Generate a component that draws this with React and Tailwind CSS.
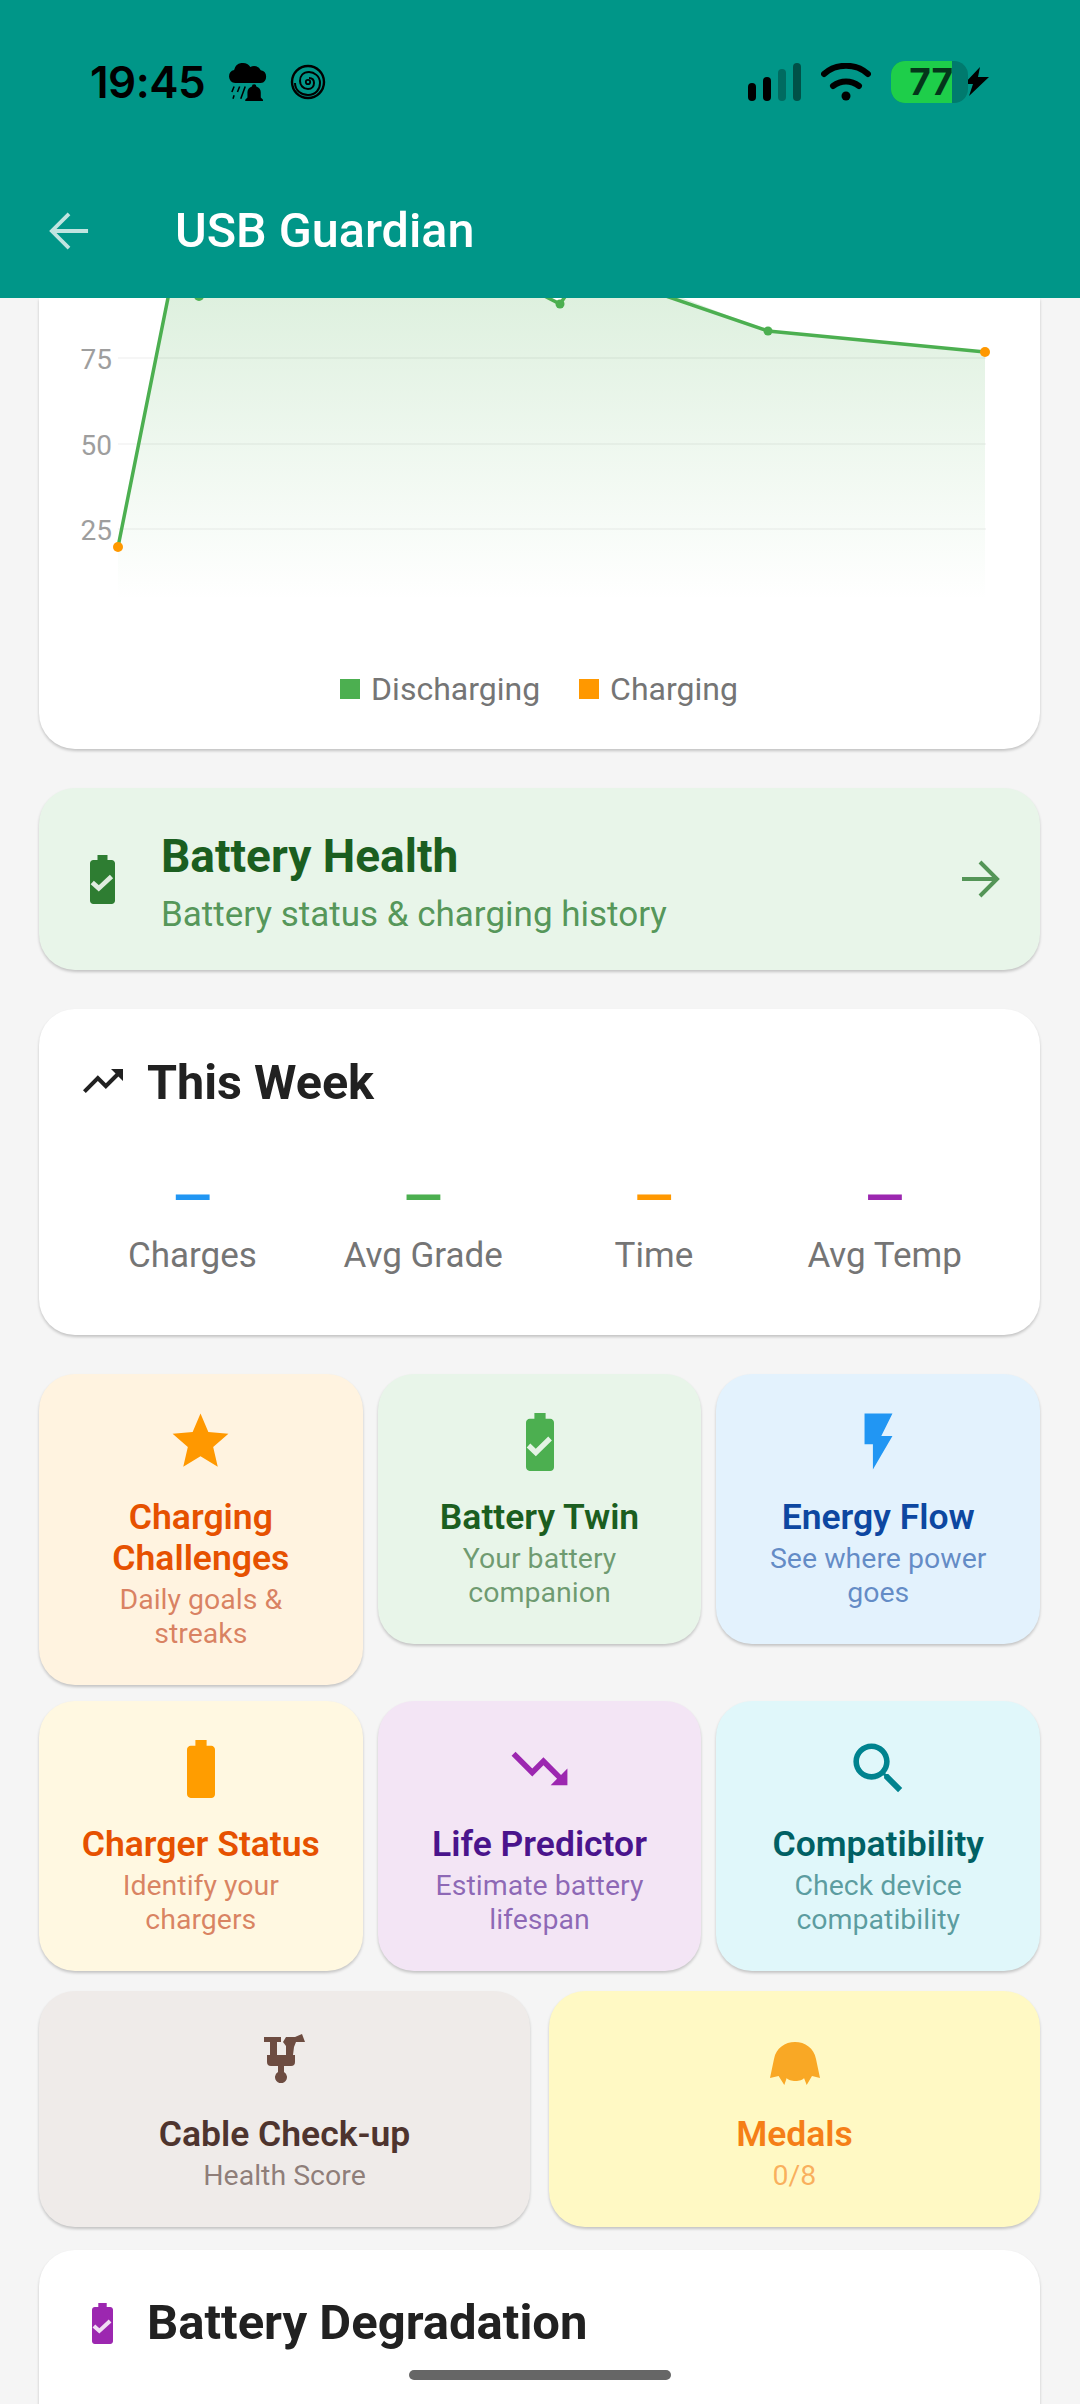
const batteryPath = "M15.67 4H14V2h-4v2H8.33C7.6 4 7 4.6 7 5.33v15.33C7 21.4 7.6 22 8.33 22h7.33c.74 0 1.34-.6 1.34-1.33V5.33C17 4.6 16.4 4 15.67 4z";

function BatteryCheck({ className }) {
  return (
    <svg viewBox="7 2 10 20" preserveAspectRatio="none" className={className}>
      <path d={batteryPath} fill="currentColor" />
      <path d="M7.9 13.2l2.6 2.4 5.1-4.8" fill="none" stroke="#fff" strokeOpacity="0.85" strokeWidth="1.9" />
    </svg>
  );
}

function MdIcon({ d, className }) {
  return (
    <svg viewBox="0 0 24 24" className={className}>
      <path d={d} fill="currentColor" />
    </svg>
  );
}

const trendUp = "M16 6l2.29 2.29-4.88 4.88-4-4L2 16.59 3.41 18l6-6 4 4 6.3-6.29L22 12V6z";
const trendDown = "M16 18l2.29-2.29-4.88-4.88-4 4L2 7.41 3.41 6l6 6 4-4 6.3 6.29L22 12v6z";
const search = "M15.5 14h-.79l-.28-.27C15.41 12.59 16 11.11 16 9.5 16 5.91 13.09 3 9.5 3S3 5.91 3 9.5 5.91 16 9.5 16c1.61 0 3.09-.59 4.23-1.57l.27.28v.79l5 4.99L20.49 19l-4.99-5zm-6 0C7.01 14 5 11.99 5 9.5S7.01 5 9.5 5 14 7.01 14 9.5 11.99 14 9.5 14z";

function StatusBar() {
  return (
    <div className="flex items-center justify-between pl-[90px] pr-[90px] pt-[59px] h-[104px] text-black">
      <div className="flex items-center">
        <span className="text-[44px] leading-[44px] font-semibold font-['Inter',sans-serif] tracking-[-0.5px]">19:45</span>
        <svg viewBox="3 1 35 36" className="w-[40px] h-[40px] ml-[23px]">
          <path d="M9 20a6 6 0 0 1-1-11.8 8 8 0 0 1 14.6-2.6A6.6 6.6 0 0 1 32 8.4 5.9 5.9 0 0 1 32 20z" fill="currentColor" />
          <path d="M8 23l-2 5M13 23l-2 5M18 23l-4 11M8 31l-1 3" stroke="currentColor" strokeWidth="1.4" fill="none" />
          <path d="M26 21a2 2 0 0 1 2 2 6 6 0 0 1 4 6v4l2 2v1H18v-1l2-2v-4a6 6 0 0 1 4-6 2 2 0 0 1 2-2zM23.6 37h4.8a2.4 2.4 0 0 1-4.8 0z" fill="currentColor" />
        </svg>
        <svg viewBox="0 0 36 36" className="w-[36px] h-[36px] ml-[22px]" fill="none" stroke="currentColor">
          <circle cx="18" cy="18" r="16" strokeWidth="2.4" />
          <path d="M5 19c0 8 7 12 13 12 8 0 12-6 12-12 0-7-6-11-11-11-6 0-9 4-9 9 0 4 3 8 8 8 4 0 6-3 6-6s-2-5-5-5" strokeWidth="2" />
          <circle cx="18" cy="18" r="2.2" strokeWidth="1.8" />
        </svg>
      </div>
      <div className="flex items-center">
        <svg viewBox="0 0 53 38" className="w-[53px] h-[38px]">
          <rect x="0" y="20" width="8" height="18" rx="4" fill="#000" />
          <rect x="15" y="14" width="8" height="24" rx="4" fill="#000" />
          <rect x="30" y="6" width="8" height="32" rx="4" fill="#006b60" />
          <rect x="45" y="0" width="8" height="38" rx="4" fill="#005148" />
        </svg>
        <svg viewBox="0 0 50 38" className="w-[50px] h-[38px] ml-[20px]" fill="none" stroke="#000" strokeWidth="6" strokeLinecap="round">
          <path d="M3 11c12-11 32-11 44 0" />
          <path d="M12 23c8-6 18-6 26 0" />
          <circle cx="25" cy="33" r="4.5" fill="#000" stroke="none" />
        </svg>
        <div className="relative ml-[20px] w-[77px] h-[42px]">
          <div className="absolute inset-0 rounded-[14px] bg-[#007a6e]" />
          <div className="absolute left-0 top-0 bottom-0 w-[61px] rounded-l-[14px] bg-[#1ece4a]" />
          <span className="absolute right-[15px] top-0 leading-[42px] text-[37px] font-bold font-['Inter',sans-serif] text-[#04361a]">77</span>
        </div>
        <svg viewBox="0 0 27 29" className="w-[27px] h-[29px] -ml-[5px]">
          <path d="M17 0L1 17h9L6 29 26 10h-11z" fill="#000" />
        </svg>
      </div>
    </div>
  );
}

function Chart() {
  return (
    <svg viewBox="0 0 1001 340" className="w-full h-[340px] block">
      <defs>
        <linearGradient id="areaFill" x1="0" y1="0" x2="0" y2="1">
          <stop offset="0" stopColor="#4caf50" stopOpacity="0.19" />
          <stop offset="1" stopColor="#4caf50" stopOpacity="0" />
        </linearGradient>
      </defs>
      <path d="M79 249L130-10H490L521 6 532-10H618L729 33 946 54V302H79Z" fill="url(#areaFill)" />
      {[60, 146, 231].map((y) => (
        <line key={y} x1="79" x2="947" y1={y} y2={y} stroke="#000" strokeOpacity="0.05" strokeWidth="1.5" />
      ))}
      {[["75", 61], ["50", 147], ["25", 232]].map(([label, y]) => (
        <text key={label} x="73" y={y + 10} textAnchor="end" fontSize="28" fill="#9e9e9e" fontFamily="Roboto">{label}</text>
      ))}
      <path d="M79 249L135-30M160-2L180-8M490-10L521 6 532-10M618-5L729 33 946 54" fill="none" stroke="#4caf50" strokeWidth="3.5" />
      <circle cx="160" cy="-2" r="5" fill="#4caf50" />
      <circle cx="521" cy="6" r="4.5" fill="#4caf50" />
      <circle cx="729" cy="33" r="4.5" fill="#4caf50" />
      <circle cx="79" cy="249" r="5" fill="#ff9800" />
      <circle cx="946" cy="54" r="5" fill="#ff9800" />
    </svg>
  );
}

const rowOne = [
  { title: "Charging Challenges", sub: "Daily goals & streaks", bg: "bg-[#fff3e0]", head: "text-[#e65100]", body: "text-[#bf360c]/60", icon: <MdIcon d="M12 17.27L18.18 21l-1.64-7.03L22 9.24l-7.19-.61L12 2 9.19 8.63 2 9.24l5.46 4.73L5.82 21z" className="w-[67px] h-[67px] text-[#ff9800]" /> },
  { title: "Battery Twin", sub: "Your battery companion", bg: "bg-[#e8f5e9]", head: "text-[#1b5e20]", body: "text-[#1b5e20]/60", icon: <BatteryCheck className="w-[28px] h-[58px] text-[#4caf50] my-[4px]" /> },
  { title: "Energy Flow", sub: "See where power goes", bg: "bg-[#e3f2fd]", head: "text-[#0d47a1]", body: "text-[#0d47a1]/60", icon: <MdIcon d="M7 2v11h3v9l7-12h-4l4-8z" className="w-[67px] h-[67px] text-[#2196f3]" /> },
];

const rowTwo = [
  { title: "Charger Status", sub: "Identify your chargers", bg: "bg-[#fff8e1]", head: "text-[#e65100]", body: "text-[#bf360c]/60", icon: <svg viewBox="7 2 10 20" preserveAspectRatio="none" className="w-[28px] h-[58px] text-[#ff9d00] my-[4px]"><path d={batteryPath} fill="currentColor" /></svg> },
  { title: "Life Predictor", sub: "Estimate battery lifespan", bg: "bg-[#f3e5f5]", head: "text-[#4a148c]", body: "text-[#4a148c]/60", icon: <MdIcon d={trendDown} className="w-[67px] h-[67px] text-[#9c27b0]" /> },
  { title: "Compatibility", sub: "Check device compatibility", bg: "bg-[#e0f7fa]", head: "text-[#006064]", body: "text-[#006064]/60", icon: <MdIcon d={search} className="w-[67px] h-[67px] text-[#00838f]" /> },
];

function Tile({ item }) {
  return (
    <div className={`flex-1 basis-0 min-w-0 rounded-[36px] shadow-[0_2px_3px_rgba(0,0,0,0.2)] px-[33px] pt-[34px] pb-[34px] flex flex-col items-center text-center ${item.bg}`}>
      <div className="h-[67px] flex items-center justify-center">{item.icon}</div>
      <div className={`mt-[22px] text-[35.5px] leading-[41px] font-semibold ${item.head}`}>{item.title}</div>
      <div className={`mt-[4px] text-[28.5px] leading-[34px] ${item.body}`}>{item.sub}</div>
    </div>
  );
}

export default function App() {
  return (
    <div className="relative h-[2404px] overflow-hidden bg-[#f5f5f5] font-['Roboto',sans-serif]">
      <div className="h-[298px] bg-[#009688]">
        <StatusBar />
        <div className="flex items-center mt-[99px] pl-[49px]">
          <svg viewBox="0 0 42 42" className="w-[40px] h-[40px]" fill="none" stroke="#c0e4e0" strokeWidth="4">
            <path d="M41 21H4M21 3L3 21l18 18" />
          </svg>
          <span className="ml-[86px] text-[48.5px] leading-[56px] font-medium text-white">USB Guardian</span>
        </div>
      </div>

      <div className="pl-[39px] pr-[40px] flex flex-col">
        <div className="bg-white rounded-b-[36px] shadow-[0_2px_3px_rgba(0,0,0,0.2)] h-[451px]">
          <Chart />
          <div className="flex items-center justify-center mt-[31px] pr-[1px]">
            <span className="w-[20px] h-[20px] bg-[#4caf50]" />
            <span className="ml-[11px] text-[32px] leading-[40px] text-[#757575]">Discharging</span>
            <span className="ml-[39px] w-[20px] h-[20px] bg-[#ff9800]" />
            <span className="ml-[11px] text-[32px] leading-[40px] text-[#757575]">Charging</span>
          </div>
        </div>

        <div className="mt-[39px] h-[182px] rounded-[36px] bg-[#e8f5e9] shadow-[0_2px_3px_rgba(0,0,0,0.2)] flex items-center pl-[51px] pr-[40px]">
          <BatteryCheck className="w-[25px] h-[49px] text-[#2e7d32]" />
          <div className="ml-[46px] flex-1 pt-[6px]">
            <div className="text-[46px] leading-[52px] font-bold text-[#1b5e20]">Battery Health</div>
            <div className="mt-[13px] text-[35px] leading-[40px] text-[#2e7d32]/80">Battery status &amp; charging history</div>
          </div>
          <svg viewBox="0 0 38 38" className="w-[38px] h-[38px]" fill="none" stroke="#2e7d32" strokeOpacity="0.8" strokeWidth="4">
            <path d="M0 19h35M18 2l17 17-17 17" />
          </svg>
        </div>

        <div className="mt-[39px] h-[326px] rounded-[36px] bg-white shadow-[0_2px_3px_rgba(0,0,0,0.2)] pl-[38px] pr-[40px] pt-[44px]">
          <div className="flex items-center">
            <MdIcon d={trendUp} className="ml-[2px] mb-[5px] w-[48px] h-[48px] text-[#212121]" />
            <span className="ml-[20px] text-[48.5px] leading-[60px] font-bold text-[#212121]">This Week</span>
          </div>
          <div className="mt-[60px] flex">
            {[
              ["Charges", "text-[#2196f3]"],
              ["Avg Grade", "text-[#4caf50]"],
              ["Time", "text-[#ff9800]"],
              ["Avg Temp", "text-[#9c27b0]"],
            ].map(([label, color]) => (
              <div key={label} className="flex-1 flex flex-col items-center">
                <span className={`text-[50px] leading-[50px] font-bold ${color}`}>—</span>
                <span className="mt-[13px] text-[35px] leading-[40px] text-[#757575]">{label}</span>
              </div>
            ))}
          </div>
        </div>

        <div className="mt-[39px] flex items-start gap-[15px]">
          {rowOne.map((item) => (
            <Tile key={item.title} item={item} />
          ))}
        </div>
        <div className="mt-[16px] flex gap-[15px]">
          {rowTwo.map((item) => (
            <Tile key={item.title} item={item} />
          ))}
        </div>
        <div className="mt-[20px] flex gap-[19px]">
          <Tile
            item={{
              title: "Cable Check-up",
              sub: "Health Score",
              bg: "bg-[#efebe9]",
              head: "text-[#4e342e]",
              body: "text-[#4e342e]/60",
              icon: (
                <svg viewBox="0 0 42 49" className="w-[42px] h-[49px] text-[#6d4c41]">
                  <path d="M0 3h17v5h-4v13h9v-9l-3-4 3-5h9l7-3 3 8h-9l-2 5-1 8h2v7a4 4 0 0 1-4 4H20v6a6 6 0 1 1-6 0v-6H7a4 4 0 0 1-4-4v-7h3V8H0z" fill="currentColor" />
                </svg>
              ),
            }}
          />
          <Tile
            item={{
              title: "Medals",
              sub: "0/8",
              bg: "bg-[#fff9c4]",
              head: "text-[#f57f17]",
              body: "text-[#f57f17]/60",
              icon: (
                <svg viewBox="0 0 50 43" className="w-[50px] h-[43px] mt-[10px] text-[#f9a825]">
                  <path d="M4 17C6 6 15 0 25 0s19 6 21 17L50 36l-8-2-5.3 9L34 36c-2 4-15 4-17.3 0L14.3 43 8.6 34 0 36z" fill="currentColor" />
                </svg>
              ),
            }}
          />
        </div>

        <div className="mt-[23px] h-[300px] rounded-t-[36px] bg-white shadow-[0_2px_3px_rgba(0,0,0,0.2)] px-[39px] pt-[43px]">
          <div className="flex items-center">
            <BatteryCheck className="w-[21px] h-[41px] ml-[14px] text-[#9c27b0]" />
            <span className="ml-[34px] text-[49px] leading-[60px] font-bold text-[#212121]">Battery Degradation</span>
          </div>
        </div>
      </div>

      <div className="absolute left-[409px] top-[2370px] w-[262px] h-[10px] rounded-full bg-[#666666]" />
    </div>
  );
}
